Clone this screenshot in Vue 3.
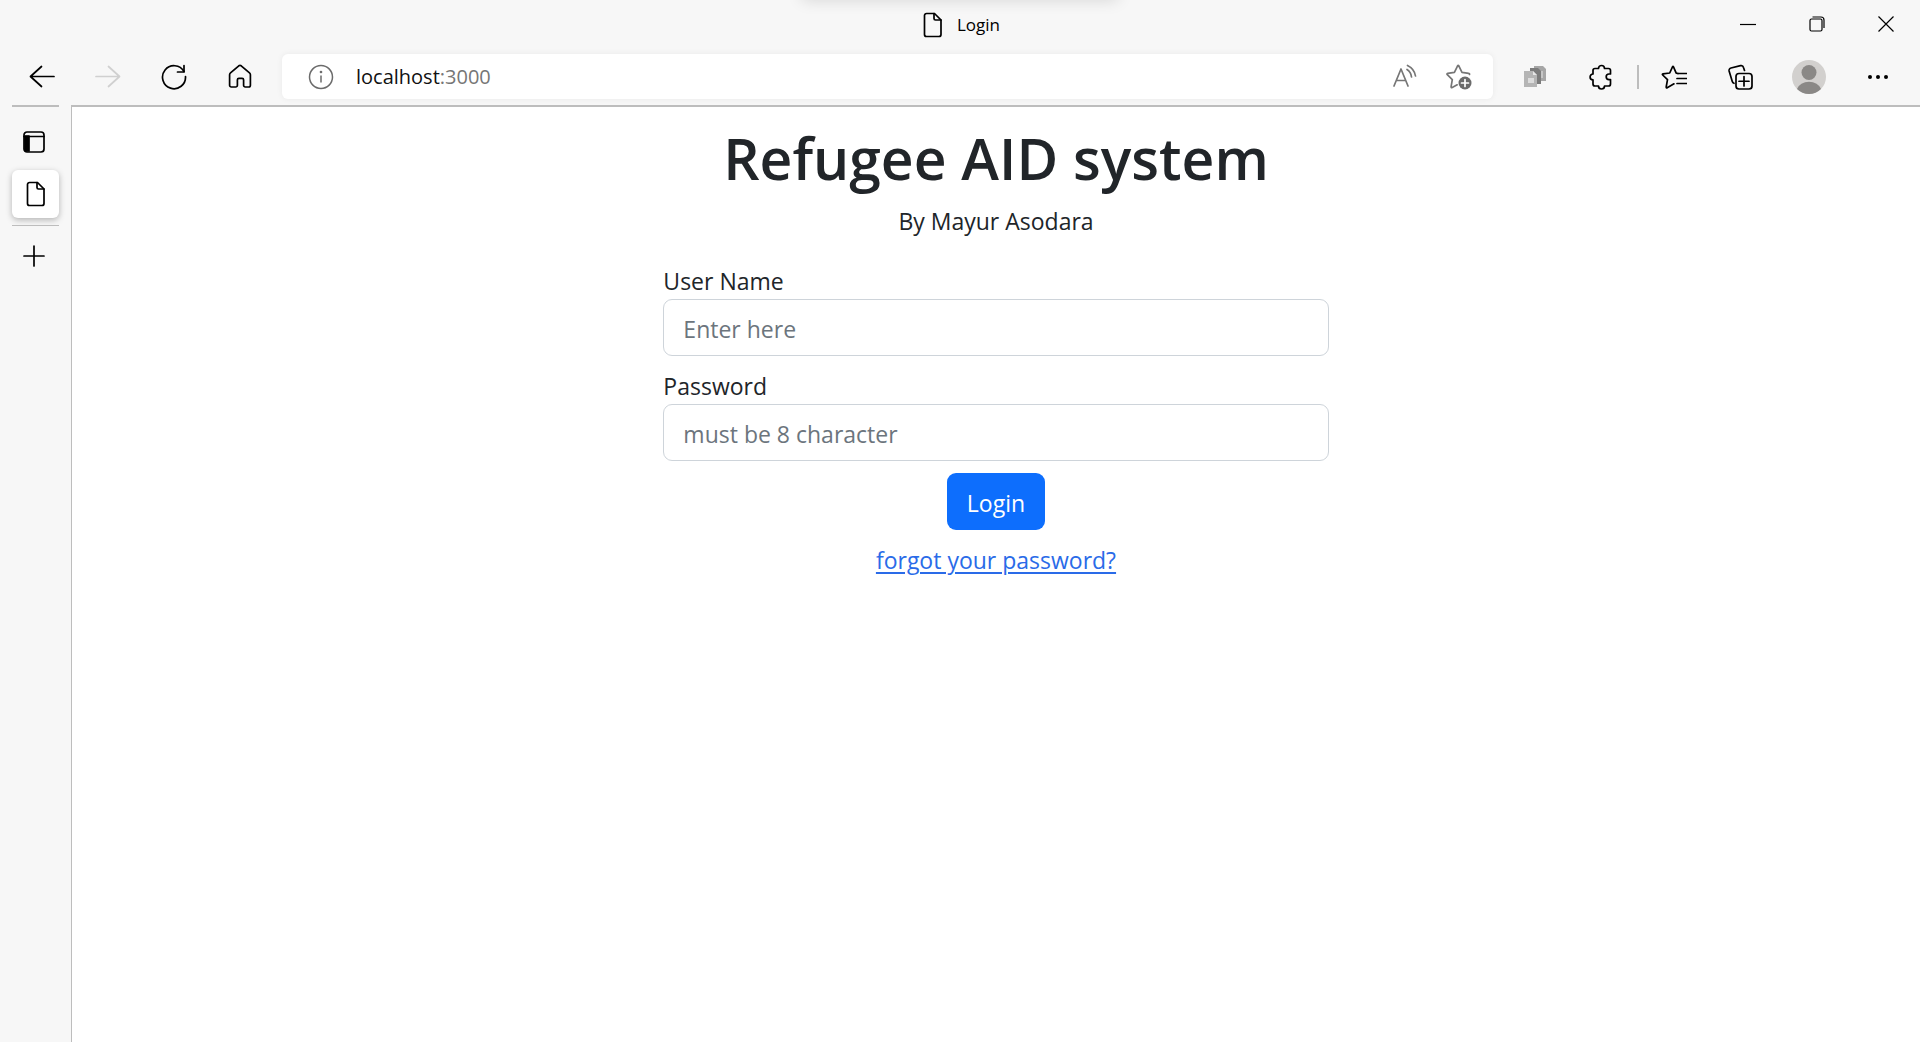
<script setup>
import { ref } from 'vue'

const address = ref('localhost:3000')
const userName = ref('')
const password = ref('')
</script>

<template>
  <div class="window">
    <header class="titlebar">
      <span class="top-shadow"></span>
      <div class="title">
        <svg width="20" height="26" viewBox="0 0 20 26" class="line">
          <path d="M3.500 1.500h8l6.500 6.500v14.500a2 2 0 0 1-2 2H3.500a2 2 0 0 1-2-2v-19a2 2 0 0 1 2-2z" />
          <path d="M11 1.500v5a1.500 1.500 0 0 0 1.500 1.500h5.500" />
        </svg>
        <span>Login</span>
      </div>
      <div class="controls">
        <button type="button" aria-label="Minimize">
          <svg width="16" height="16" viewBox="0 0 16 16" class="thin"><path d="M0 8.500h16" /></svg>
        </button>
        <button type="button" aria-label="Restore">
          <svg width="16" height="16" viewBox="0 0 16 16" class="thin">
            <rect x="1" y="3" width="12" height="12" rx="1.500" />
            <path d="M3.500 1h8.500a3 3 0 0 1 3 3v8" />
          </svg>
        </button>
        <button type="button" aria-label="Close">
          <svg width="16" height="16" viewBox="0 0 16 16" class="thin"><path d="M.5.5l15 15M15.500.5l-15 15" /></svg>
        </button>
      </div>
    </header>

    <nav class="toolbar" aria-label="Browser">
      <button type="button" class="tool" aria-label="Back">
        <svg width="26" height="26" viewBox="0 0 26 26" class="line"><path d="M25 12.500H1.500M12.500 2.500L1.500 12.500l11 10" /></svg>
      </button>
      <button type="button" class="tool" aria-label="Forward" disabled>
        <svg width="26" height="26" viewBox="0 0 26 26" class="line faded"><path d="M1 12.500h23.500M13.500 2.500l11 10-11 10" /></svg>
      </button>
      <button type="button" class="tool" aria-label="Refresh">
        <svg width="26" height="26" viewBox="0 0 26 26" class="line">
          <path d="M23 7.500A11.500 11.500 0 1 0 24.500 12.500" />
          <path d="M23 1.500v6.500h-6.500" />
        </svg>
      </button>
      <button type="button" class="tool" aria-label="Home">
        <svg width="26" height="26" viewBox="0 0 26 26" class="line">
          <path d="M11.800 1.800a2 2 0 0 1 2.400 0l8.300 7q.9.8.9 2v10.500a1.700 1.700 0 0 1-1.700 1.700h-3.400a1.700 1.700 0 0 1-1.700-1.700v-5.500a1.500 1.500 0 0 0-1.500-1.500h-3.200a1.500 1.500 0 0 0-1.500 1.500v5.500a1.700 1.700 0 0 1-1.700 1.700H4.300a1.700 1.700 0 0 1-1.700-1.700V10.800q0-1.200.9-2z" />
        </svg>
      </button>

      <div class="address">
        <svg width="26" height="26" viewBox="0 0 26 26" class="info">
          <circle cx="13" cy="13" r="11.500" />
          <path d="M13 11.500v7" />
          <circle cx="13" cy="8" r=".6" />
        </svg>
        <a class="url" href="#" :aria-label="address">localhost<span>:3000</span></a>
        <button type="button" aria-label="Read aloud">
          <svg width="26" height="26" viewBox="0 0 26 26" class="line gray">
            <path d="M3 22L10 5 17 22M5.500 16.500h9" />
            <path d="M16 5.500q4 2.500 4.500 7.500M16.500 1.500q7 3.500 8 10.500" />
          </svg>
        </button>
        <button type="button" aria-label="Add to favorites">
          <svg width="28" height="28" viewBox="0 0 28 28" class="line gray">
            <path d="M24.500 11.500q.3-1-.8-1.100l-6.700-1-3.200-6.600q-.6-1-1.200 0l-3.200 6.600-6.700 1q-1.300.3-.4 1.300l5 4.900-1.200 7q-.1 1.300 1.100.8l5-2.600" />
            <circle cx="20" cy="20" r="6.500" class="disc" />
            <path d="M20 16.500v7M16.500 20h7" class="white" />
          </svg>
        </button>
      </div>

      <button type="button" class="tool" aria-label="Copy extension">
        <svg width="24" height="24" viewBox="0 0 24 24">
          <path d="M11 1h9l3 3v12H11z" fill="#a6a6a6" />
          <path d="M15 6h5v7h-5z" fill="#c6c6c6" />
          <path d="M7 3h8l3 3v13H7z" fill="#7c7c7c" />
          <path d="M1 6h9l4 4v12H1z" fill="#b5b5b5" />
          <path d="M5 13h6v5H5z" fill="#dcdcdc" />
          <path d="M10 6l4 4h-4z" fill="#e6e6e6" />
        </svg>
      </button>
      <button type="button" class="tool" aria-label="Extensions">
        <svg width="26" height="26" viewBox="0 0 26 26" class="line">
          <path d="M7 4.500h3.500a3 3 0 0 1 6 0H20.500a2 2 0 0 1 2 2V10h-1.500a2.800 2.800 0 0 0 0 5.600h1.500v4.400a2 2 0 0 1-2 2H16.500a3 3 0 0 1-6 0H7a2 2 0 0 1-2-2V15.800a2.900 2.900 0 0 1 0-5.800V6.500a2 2 0 0 1 2-2z" />
        </svg>
      </button>
      <span class="separator"></span>
      <button type="button" class="tool" aria-label="Favorites">
        <svg width="26" height="26" viewBox="0 0 26 26" class="line">
          <path d="M17 9.500l-1.800-.3-2.700-6.400q-.5-.9-1 0L8.700 9 2 9.800q-1.100.3-.3 1.200l4.800 4.700L5.200 23q0 1.200 1 .7l6.800-3.900" />
          <path d="M17 9.500h8.500M16 14.500h9.500M16 19.500h9.500" />
        </svg>
      </button>
      <button type="button" class="tool" aria-label="Collections">
        <svg width="26" height="26" viewBox="0 0 26 26" class="line">
          <rect x="9" y="9.500" width="16" height="15.500" rx="3" />
          <path d="M17 12.500v9.500M12 17.250h10" />
          <path d="M17.500 6.500l-1-3a2.500 2.500 0 0 0-3-1.800L4 4a2.500 2.500 0 0 0-1.900 3l3.200 10.500q.4 1.300 1.700 1.800" />
        </svg>
      </button>
      <button type="button" class="tool profile" aria-label="Profile">
        <svg width="34" height="34" viewBox="0 0 34 34">
          <circle cx="17" cy="17" r="17" fill="#d2d0ce" />
          <circle cx="17" cy="12.500" r="7.500" fill="#8a8886" />
          <path d="M5 29a12.500 10 0 0 1 24 0 17 17 0 0 1-24 0z" fill="#8a8886" />
        </svg>
      </button>
      <button type="button" class="tool" aria-label="Settings and more">
        <svg width="22" height="6" viewBox="0 0 22 6">
          <circle cx="3" cy="3" r="2" /><circle cx="11" cy="3" r="2" /><circle cx="19" cy="3" r="2" />
        </svg>
      </button>
    </nav>

    <div class="body">
      <aside class="tabs">
        <button type="button" class="tab-menu" aria-label="Tab actions">
          <svg width="22" height="22" viewBox="0 0 22 22" class="line">
            <path d="M2 5h4v15H4a2 2 0 0 1-2-2z" fill="#000" />
            <rect x="1" y="1" width="20" height="20" rx="3" />
            <path d="M1 5.500h20" />
          </svg>
        </button>
        <button type="button" class="tab" aria-label="Login">
          <svg width="20" height="26" viewBox="0 0 20 26" class="line">
            <path d="M3.500 1.500h8l6.500 6.500v14.500a2 2 0 0 1-2 2H3.500a2 2 0 0 1-2-2v-19a2 2 0 0 1 2-2z" />
            <path d="M11 1.500v5a1.500 1.500 0 0 0 1.500 1.500h5.500" />
          </svg>
        </button>
        <span class="rule"></span>
        <button type="button" class="new-tab" aria-label="New tab">
          <svg width="22" height="22" viewBox="0 0 22 22" class="line"><path d="M11 1v20M1 11h20" /></svg>
        </button>
      </aside>

      <main class="page">
        <h1>Refugee AID system</h1>
        <p class="byline">By Mayur Asodara</p>
        <form class="login" @submit.prevent>
          <div class="field">
            <label for="user">User Name</label>
            <input id="user" v-model="userName" type="text" placeholder="Enter here" />
          </div>
          <div class="field">
            <label for="pass">Password</label>
            <input id="pass" v-model="password" type="password" placeholder="must be 8 character" />
          </div>
          <button type="submit" class="submit">Login</button>
          <a href="#">forgot your password?</a>
        </form>
      </main>
    </div>
  </div>
</template>

<style>
body {
  background: #f7f7f7;
}
</style>

<style scoped>
* {
  box-sizing: border-box;
}
.window {
  display: flex;
  flex-direction: column;
  min-height: 100vh;
  background: #f7f7f7;
  color: #000;
  font-family: "Open Sans", "Noto Sans", sans-serif;
}
button {
  display: flex;
  align-items: center;
  justify-content: center;
  padding: 0;
  border: 0;
  background: none;
  font: inherit;
}
svg {
  flex: none;
  display: block;
}
.line {
  fill: none;
  stroke: #000;
  stroke-width: 1.7;
  stroke-linecap: round;
  stroke-linejoin: round;
}
.faded {
  stroke: #d0d0d0;
}
.gray {
  stroke: #767676;
}
.disc {
  fill: #6b6b6b;
  stroke: none;
}
.white {
  stroke: #fff;
}
.thin {
  fill: none;
  stroke: #000;
  stroke-width: 1.2;
}
.titlebar {
  position: relative;
  display: grid;
  grid-template-columns: 1fr auto 1fr;
  align-items: center;
  height: 48px;
  overflow: hidden;
}
.top-shadow {
  position: absolute;
  top: -12px;
  left: 42%;
  right: 42%;
  height: 8px;
  box-shadow: 0 0 16px 4px rgba(0, 0, 0, 0.14);
}
.title {
  grid-column: 2;
  display: flex;
  align-items: center;
  gap: 14px;
  padding: 2px 0 0 3px;
  font-size: 17px;
  line-height: 24px;
}
.controls {
  display: flex;
  justify-content: flex-end;
}
.controls button {
  width: 69px;
  height: 48px;
}
.toolbar {
  display: flex;
  align-items: center;
  height: 57px;
  padding: 0 9px;
}
.tool {
  flex: none;
  width: 66px;
  height: 45px;
}
.profile {
  width: 72px;
}
.separator {
  width: 2px;
  height: 24px;
  margin: 0 2px 0 3px;
  background: #bdbdbd;
}
.address {
  flex: 1;
  display: flex;
  align-items: center;
  gap: 28px;
  height: 45px;
  margin: 0 9px;
  padding: 0 20px 0 26px;
  border-radius: 6px;
  background: #fff;
  box-shadow: 0 0 6px rgba(0, 0, 0, 0.06);
}
.info {
  fill: none;
  stroke: #6b6b6b;
  stroke-width: 1.5;
}
.url {
  flex: 1;
  margin-left: -6px;
  color: #111;
  font-size: 20px;
  line-height: 28px;
  text-decoration: none;
}
.url span {
  color: #767676;
}
.body {
  flex: 1;
  display: flex;
}
.tabs {
  display: flex;
  flex-direction: column;
  width: 47px;
  margin: 0 12px;
  border-top: 2px solid #bdbdbd;
}
.tab-menu,
.new-tab {
  height: 48px;
  padding-right: 3px;
}
.tab-menu {
  margin: 11px 0 4px;
}
.tab {
  height: 48px;
  border-radius: 6px;
  background: #fff;
  box-shadow: 0 2px 6px rgba(0, 0, 0, 0.28);
}
.rule {
  height: 1px;
  margin: 7px 0 6px;
  background: #bdbdbd;
}
.page {
  flex: 1;
  display: flex;
  flex-direction: column;
  align-items: center;
  padding-top: 15px;
  border-top: 2px solid #bdbdbd;
  border-left: 1px solid #bdbdbd;
  background: #fff;
  color: #212529;
  font-size: 23px;
  line-height: 36px;
}
h1 {
  margin: 0 0 9px;
  font-size: 57px;
  font-weight: 600;
  line-height: 72px;
}
.byline {
  margin: 0 0 24px;
}
.login {
  display: flex;
  flex-direction: column;
  align-items: center;
  gap: 12px;
  width: 36%;
}
.field {
  display: flex;
  flex-direction: column;
  width: 100%;
}
input {
  width: 100%;
  height: 57px;
  padding: 2px 19px 0;
  border: 1px solid #ced4da;
  border-radius: 9px;
  background: #fff;
  color: #212529;
  font: inherit;
}
input::placeholder {
  color: #6c757d;
  opacity: 1;
}
.submit {
  height: 57px;
  padding: 2px 20px 0;
  border-radius: 9px;
  background: #0d6efd;
  color: #fff;
}
.login a {
  color: #2a6be8;
  text-decoration-thickness: 2px;
  text-underline-offset: 3px;
}
</style>
